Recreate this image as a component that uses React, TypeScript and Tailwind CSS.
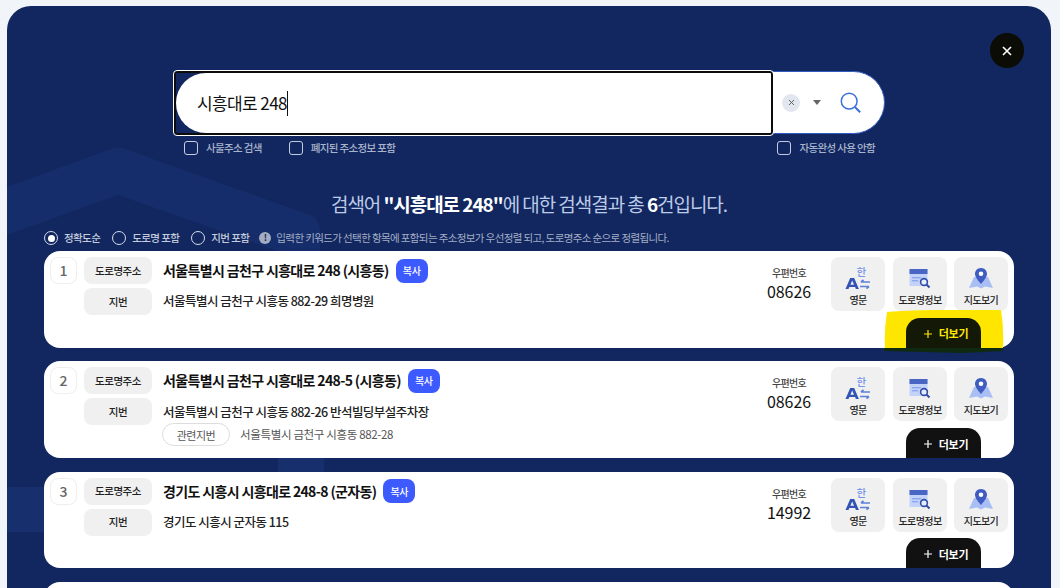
const FONT = "font-['Noto_Sans_CJK_KR','Noto_Sans',sans-serif]";

const results = [
    { no: 1, road: "서울특별시 금천구 시흥대로 248 (시흥동)", jibun: "서울특별시 금천구 시흥동 882-29 희명병원", zip: "08626", marked: true },
    { no: 2, road: "서울특별시 금천구 시흥대로 248-5 (시흥동)", jibun: "서울특별시 금천구 시흥동 882-26 반석빌딩부설주차장", zip: "08626", related: "서울특별시 금천구 시흥동 882-28" },
    { no: 3, road: "경기도 시흥시 시흥대로 248-8 (군자동)", jibun: "경기도 시흥시 군자동 115", zip: "14992" },
];

function CheckItem({ label, className = "" }: { label: string; className?: string }) {
    return (
        <label className={`flex items-center gap-[8px] ${className}`}>
            <span className="w-[14px] h-[14px] rounded-[3px] border border-[#c5cede]"></span>
            <span className="text-[10.5px] font-medium tracking-[-0.65px] text-[#a9b4cc]">{label}</span>
        </label>
    );
}

function Radio({ label, checked }: { label: string; checked?: boolean }) {
    return (
        <label className="flex items-center gap-[6px]">
            <span className="w-[14px] h-[14px] rounded-full border border-[#d5dbe8] flex items-center justify-center">
                {checked && <span className="w-[7px] h-[7px] rounded-full bg-white"></span>}
            </span>
            <span className="text-[10.5px] font-medium tracking-[-0.6px] text-[#c3cbdd]">{label}</span>
        </label>
    );
}

function TranslateIcon() {
    return (
        <svg width="26" height="28" viewBox="0 0 26 28">
            <text x="11.5" y="14" fontSize="10.5" fontWeight="500" fill="#7495ea" fontFamily="Noto Sans CJK KR">한</text>
            <path d="M0.5 27 L5.2 16 H9.2 L13.9 27 H10.9 L10.1 25 H4.3 L3.5 27 Z M5.4 22.7 H9 L7.2 18.4 Z" fill="#3353b5" fillRule="evenodd" />
            <path d="M16 20 H25 M16 20 L18.5 17.8 M15 24.5 H24 M24 24.5 L21.5 26.7" stroke="#5f80d8" strokeWidth="1.7" fill="none" />
        </svg>
    );
}

function RoadInfoIcon() {
    return (
        <svg className="mb-[1px]" width="22" height="20" viewBox="0 0 22 20">
            <rect x="0.5" y="0" width="18" height="17" fill="#c3d2f8" />
            <rect x="0.5" y="0" width="18" height="5" fill="#4a66c4" />
            <rect x="3" y="8" width="9" height="1.4" fill="#8ea6ee" />
            <rect x="3" y="11" width="6" height="1.4" fill="#8ea6ee" />
            <circle cx="15" cy="13" r="3.4" fill="#e6ecfc" stroke="#2f4da8" strokeWidth="1.6" />
            <path d="M17.5 15.5 L20.5 18.5" stroke="#2f4da8" strokeWidth="2" />
        </svg>
    );
}

function MapIcon() {
    return (
        <svg className="mb-[1px]" width="24" height="21" viewBox="0 0 24 21">
            <path d="M5 9 L0 20 L8 18.5 L12 20.5 L16 18.5 L24 20 L19 9 Z" fill="#a9bef5" />
            <path d="M12 0 C8.2 0 6 2.8 6 5.8 C6 9.6 10 13.5 12 16 C14 13.5 18 9.6 18 5.8 C18 2.8 15.8 0 12 0 Z" fill="#3f5cc0" />
            <circle cx="12" cy="5.8" r="2.3" fill="#fff" />
        </svg>
    );
}

function ActionButton({ label, children }: { label: string; children: React.ReactNode }) {
    return (
        <div className="w-[54px] h-[54px] rounded-lg bg-[#f0f0f0] flex flex-col items-center pt-[9px]">
            <div className="h-[24px] flex items-end justify-center">{children}</div>
            <span className="mt-[3px] text-[10px] font-medium tracking-[-0.6px] leading-[14px] text-[#222] whitespace-nowrap">{label}</span>
        </div>
    );
}

function LabelBox({ children }: { children: React.ReactNode }) {
    return (
        <div className="w-[68px] h-[27px] rounded-lg bg-[#f0f0f0] flex items-center justify-center text-[10.5px] font-medium tracking-[-0.5px] text-[#222]">
            {children}
        </div>
    );
}

function ResultCard({ item }: { item: (typeof results)[number] }) {
    return (
        <div className="relative h-[96.6px] shrink-0 rounded-[16px] bg-white flex pl-[6px] pt-[6px] pr-[6px]">
            <div className="w-[27px] h-[27px] rounded-lg border border-[#eeeeee] flex items-center justify-center text-[14px] font-medium text-[#666]">
                {item.no}
            </div>
            <div className="ml-[7px] flex flex-col gap-[4px]">
                <LabelBox>도로명주소</LabelBox>
                <LabelBox>지번</LabelBox>
            </div>
            <div className="ml-[11px] flex-1">
                <div className="h-[27px] flex items-center">
                    <span className="text-[14px] font-bold tracking-[-0.65px] text-[#111]">{item.road}</span>
                    <span className="ml-[7px] w-[32px] h-[24px] rounded-lg bg-[#3d5afe] flex items-center justify-center text-[10px] font-medium tracking-[-0.3px] text-white">복사</span>
                </div>
                <div className="mt-[4px] h-[27px] flex items-center text-[12.5px] font-medium tracking-[-0.52px] text-[#222]">{item.jibun}</div>
                {item.related && (
                    <div className="-mt-[2px] -ml-[1px] flex items-center">
                        <span className="w-[68px] h-[23px] rounded-full border border-[#dddddd] flex items-center justify-center text-[11px] tracking-[-0.5px] text-[#555]">관련지번</span>
                        <span className="ml-[10px] text-[11.5px] tracking-[-0.35px] text-[#555]">{item.related}</span>
                    </div>
                )}
            </div>
            <div className="w-[82px] mr-[2px] flex flex-col items-center pt-[9px]">
                <span className="text-[10px] font-medium tracking-[-0.7px] text-[#444] leading-[14px]">우편번호</span>
                <span className="-mt-[1px] text-[16px] text-[#111] leading-[24px] tracking-[-0.1px]">{item.zip}</span>
            </div>
            <div className="ml-[-1px] flex gap-[8px] h-[54px]">
                <ActionButton label="영문"><TranslateIcon /></ActionButton>
                <ActionButton label="도로명정보"><RoadInfoIcon /></ActionButton>
                <div className="-ml-[1px]"><ActionButton label="지도보기"><MapIcon /></ActionButton></div>
            </div>
            {/* yellow marker drawn over the screenshot */}
            {item.marked && (
                <svg className="absolute left-[839px] bottom-[-6px]" width="122" height="44" viewBox="0 0 122 44">
                    <path d="M4 2 Q40 -1 118 0 Q121 18 120 38 H2 Q1 20 4 2 Z" fill="#ffe600" />
                    <path d="M1 38 H120 V41 L80 43 L40 42 L1 41 Z" fill="#0f2a10" />
                </svg>
            )}
            <div className={`absolute bottom-0 right-[33px] w-[75px] h-[30px] pt-[2px] pl-[5px] rounded-t-[14px] flex items-center justify-center gap-[7px] ${item.marked ? "bg-[#141806] text-[#ffe600]" : "bg-[#111111] text-white"}`}>
                <svg width="8" height="8" viewBox="0 0 8 8"><path d="M0 4 H8 M4 0 V8" stroke="currentColor" strokeWidth="1.2" /></svg>
                <span className="text-[11px] font-bold tracking-[-0.3px]">더보기</span>
            </div>
        </div>
    );
}

export default function App() {
    return (
        <div className={`h-[588px] w-[1060px] overflow-hidden bg-[#f1f5fa] pt-[6px] pr-[9px] pl-[7px] ${FONT}`}>
            <div className="relative h-[640px] rounded-[24px] bg-[#12275f] overflow-hidden">
                {/* background shapes */}
                <svg className="absolute left-0 top-0" width="1044" height="582" viewBox="0 0 1044 582">
                    <path d="M0 181 L104 143 Q111 140 118 143 L303 209 Q313 213 313 226 V250 H0 Z" fill="#152d6a" />
                    <path d="M0 229 L111 189 L290 252 H0 Z" fill="#12275f" />
                    <rect x="271" y="440" width="46" height="40" fill="#172f6c" />
                    <rect x="0" y="481" width="39" height="45" fill="#172f6c" />
                </svg>

                {/* close */}
                <button className="absolute right-[27px] top-[27px] w-[34px] h-[35px] rounded-full bg-[#0c0c06] flex items-center justify-center">
                    <svg width="10" height="10" viewBox="0 0 10 10"><path d="M1 1 L9 9 M9 1 L1 9" stroke="#fff" strokeWidth="1.6" /></svg>
                </button>

                <div className="relative pt-[65px]">
                    {/* search */}
                    <div className="relative w-[711px] h-[63px] rounded-full bg-white border border-[#2f5bc0] flex items-center justify-end pr-[22px] ml-[167px]">
                        <div className="absolute left-[-1px] top-[-1px] w-[599px] h-[64px] rounded-[3px] border-[2px] border-[#0c0c0c] outline outline-1 outline-white bg-[#12275f] overflow-hidden">
                            <div className="h-full rounded-l-[30px] bg-white flex items-center pl-[21px] text-[17px] tracking-[-0.6px] text-[#111]">
                                시흥대로 248<span className="inline-block w-[1px] h-[25px] bg-[#111]"></span>
                            </div>
                        </div>
                        <span className="w-[18px] h-[18px] rounded-full bg-[#e2e6ef] flex items-center justify-center">
                            <svg width="7" height="7" viewBox="0 0 7 7"><path d="M1 1 L6 6 M6 1 L1 6" stroke="#555" strokeWidth="0.9" /></svg>
                        </span>
                        <svg className="ml-[13px]" width="8" height="5" viewBox="0 0 8 5"><path d="M0 0 H8 L4 5 Z" fill="#666" /></svg>
                        <svg className="ml-[19px]" width="22" height="22" viewBox="0 0 24 24">
                            <circle cx="10" cy="10" r="8.6" fill="none" stroke="#3b6fdc" strokeWidth="1.6" />
                            <path d="M16.3 16.3 L22 22" stroke="#3b6fdc" strokeWidth="2.2" />
                        </svg>
                    </div>

                    <div className="mt-[7px] ml-[177px] w-[700px] h-[14px] flex items-center">
                        <CheckItem label="사물주소 검색" />
                        <CheckItem label="폐지된 주소정보 포함" className="ml-[27px]" />
                        <CheckItem label="자동완성 사용 안함" className="ml-auto mr-[9px]" />
                    </div>

                    <div className="mt-[35px] text-center text-[19px] leading-[28px] tracking-[-1.05px] text-[#bccbe8]">
                        검색어 <b className="font-bold text-white">"시흥대로 248"</b>에 대한 검색결과 총 <b className="font-bold text-white">6</b>건입니다.
                    </div>

                    <div className="mt-[12px] ml-[37px] h-[16px] flex items-center gap-[12px]">
                        <Radio label="정확도순" checked />
                        <Radio label="도로명 포함" />
                        <Radio label="지번 포함" />
                        <div className="-ml-[2px] flex items-center gap-[5px]">
                            <span className="w-[12px] h-[12px] rounded-full bg-[#a3acc0] flex items-center justify-center text-[9px] font-bold text-[#12275f]">!</span>
                            <span className="text-[10.5px] tracking-[-0.62px] text-[#a3aec6]">입력한 키워드가 선택한 항목에 포함되는 주소정보가 우선정렬 되고, 도로명주소 순으로 정렬됩니다.</span>
                        </div>
                    </div>

                    <div className="mt-[5px] mx-[37px] flex flex-col gap-[13.8px]">
                        {results.map((item) => (
                            <ResultCard key={item.no} item={item} />
                        ))}
                        <div className="h-[97px] shrink-0 rounded-[16px] bg-white"></div>
                    </div>
                </div>
            </div>
        </div>
    );
}
